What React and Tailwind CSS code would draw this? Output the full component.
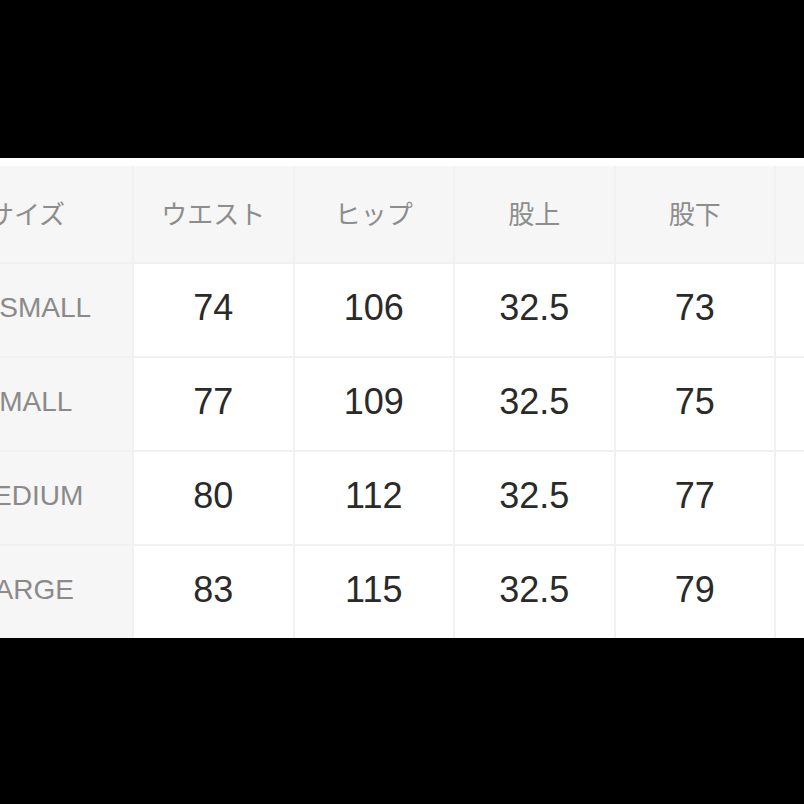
import React from "react";

const headers = ["サイズ", "ウエスト", "ヒップ", "股上", "股下", "ワタリ幅", "裾幅"];
const rows = [
  ["XXSMALL", "74", "106", "32.5", "73", "30", "19"],
  ["SMALL", "77", "109", "32.5", "75", "31", "20"],
  ["MEDIUM", "80", "112", "32.5", "77", "32", "21"],
  ["LARGE", "83", "115", "32.5", "79", "33", "22"],
];

export default function App() {
  return (
    <div className="w-[804px] h-[804px] bg-black flex flex-col overflow-hidden">
      <div className="h-[158px] shrink-0 bg-black" />
      <div className="bg-white pt-[8px] shrink-0 overflow-hidden">
        <div className="-ml-[79px] w-max grid grid-cols-[211px_repeat(6,158.5px)] gap-x-[2px] gap-y-[2px] bg-[#f1f1f1]">
          {headers.map((h) => (
            <div
              key={h}
              className="h-[96px] bg-[#f6f6f6] flex items-center justify-center text-[26px] text-[#8d8d8d] pb-[4px]"
              style={{ fontFamily: '"Noto Sans CJK JP", "Noto Sans", sans-serif' }}
            >
              {h}
            </div>
          ))}
          {rows.map((r) =>
            r.map((c, i) =>
              i === 0 ? (
                <div
                  key={r[0] + i}
                  className="h-[92px] bg-[#f6f6f6] flex items-center justify-center text-[28px] text-[#8a8a8a] pb-[5px]"
                  style={{ fontFamily: '"Liberation Sans", Arial, sans-serif' }}
                >
                  {c}
                </div>
              ) : (
                <div
                  key={r[0] + i}
                  className="h-[92px] bg-white flex items-center justify-center text-[36px] text-[#2a2a2a] pb-[5px]"
                  style={{ fontFamily: '"Liberation Sans", Arial, sans-serif' }}
                >
                  {c}
                </div>
              )
            )
          )}
        </div>
      </div>
      <div className="flex-1 bg-black" />
    </div>
  );
}
